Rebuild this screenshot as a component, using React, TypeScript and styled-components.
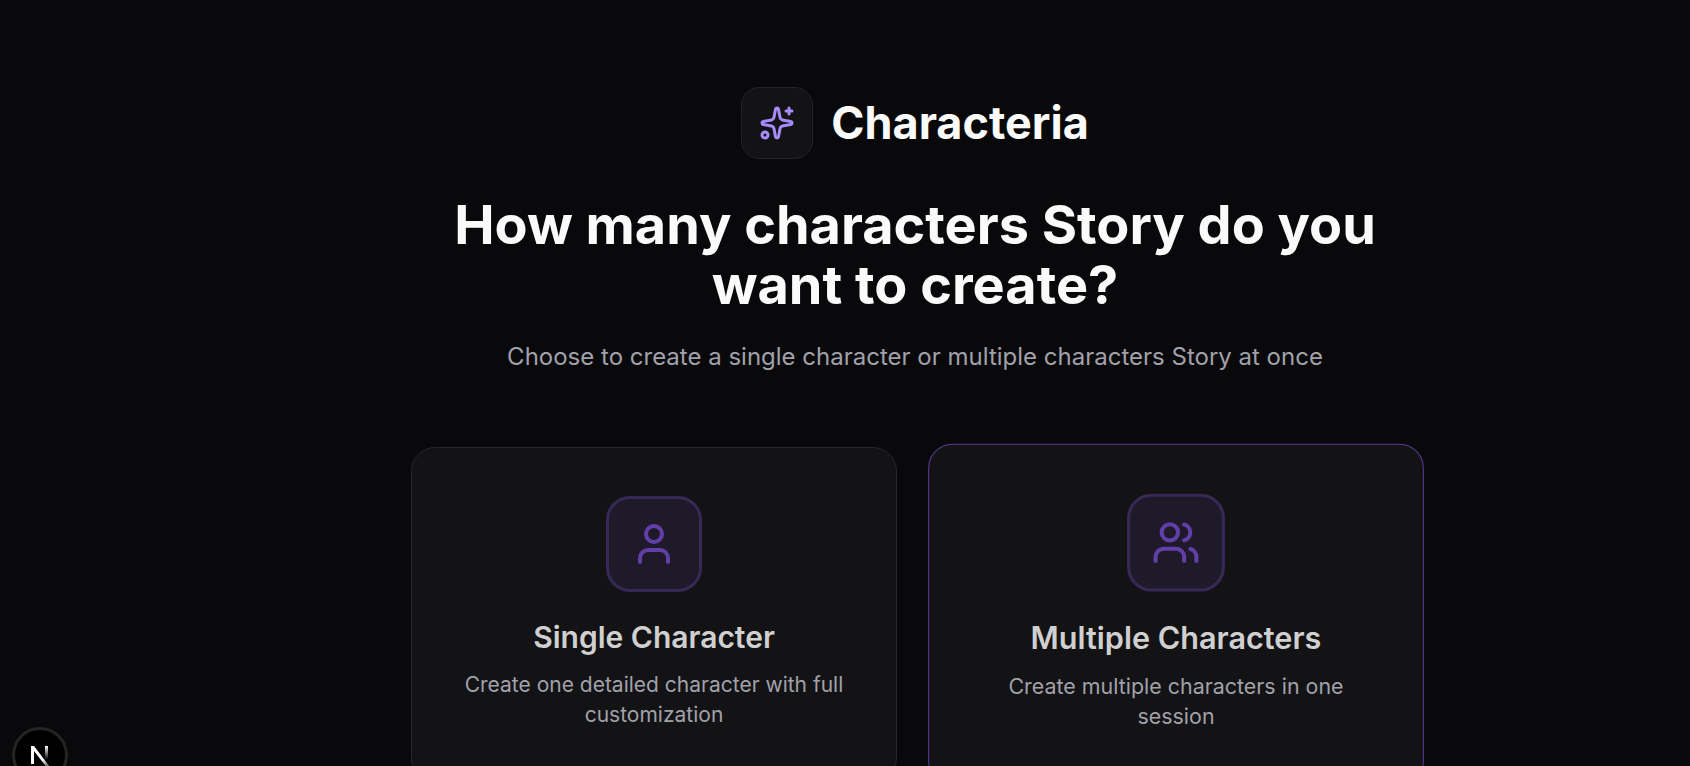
import React from 'react';
import styled, { createGlobalStyle } from 'styled-components';
import { Sparkles, User, Users, type LucideIcon } from 'lucide-react';

const GlobalStyle = createGlobalStyle`
  *, *::before, *::after { box-sizing: border-box; }
  html { background: #09090b; }
  body {
    margin: 0;
    height: 100vh;
    overflow: hidden;
    background: #09090b;
    color: #fafafa;
    font-family: Inter, sans-serif;
  }
  h1, h2, p { margin: 0; }
`;

const Page = styled.main`
  display: flex;
  flex-direction: column;
  align-items: center;
  padding: 87px 0 72px 140px;
`;

const Content = styled.div`
  width: 100%;
  max-width: 1008px;
  display: flex;
  flex-direction: column;
  align-items: center;
  text-align: center;
`;

const Brand = styled.div`
  display: flex;
  align-items: center;
  gap: 18px;
  margin-bottom: 36px;
`;

const BrandMark = styled.span`
  display: flex;
  align-items: center;
  justify-content: center;
  width: 72px;
  height: 72px;
  border: 1px solid #232326;
  border-radius: 18px;
  background: #131315;
  color: #a78bfa;
`;

const BrandName = styled.span`
  font-size: 45px;
  line-height: 50px;
  font-weight: 700;
`;

const Title = styled.h1`
  font-size: 54px;
  line-height: 60px;
  font-weight: 700;
`;

const Subtitle = styled.p`
  margin-top: 24px;
  font-size: 24px;
  line-height: 36px;
  color: #a1a1aa;
`;

const Choices = styled.div`
  width: 100%;
  display: grid;
  grid-template-columns: 1fr 1fr;
  gap: 36px;
  margin-top: 72px;
`;

const Card = styled.button<{ $active?: boolean }>`
  display: flex;
  flex-direction: column;
  align-items: center;
  min-height: 335px;
  padding: 48px;
  border: 1px solid ${({ $active }) => ($active ? '#583b98' : '#27272a')};
  border-radius: 24px;
  background: #131315;
  color: #d0d0d0;
  font-family: inherit;
  text-align: center;
  cursor: pointer;
  transform: ${({ $active }) => ($active ? 'scale(1.02)' : 'none')};
`;

const CardIcon = styled.span`
  display: flex;
  align-items: center;
  justify-content: center;
  width: 96px;
  height: 96px;
  border: 3px solid #372856;
  border-radius: 24px;
  background: #1f1a2a;
  color: #623fa8;
`;

const CardTitle = styled.span`
  margin-top: 24px;
  font-size: 30px;
  line-height: 42px;
  font-weight: 600;
`;

const CardText = styled.span`
  margin-top: 12px;
  font-size: 21px;
  line-height: 30px;
  color: #a1a1aa;
`;

const DevBadge = styled.button`
  position: fixed;
  left: 12px;
  bottom: -17px;
  width: 56px;
  height: 56px;
  padding: 0;
  display: flex;
  align-items: center;
  justify-content: center;
  border: 3px solid #242424;
  border-radius: 50%;
  background: #000;

  svg { flex-shrink: 0; }
`;

const choices: { icon: LucideIcon; title: string; text: string; active?: boolean }[] = [
  { icon: User, title: 'Single Character', text: 'Create one detailed character with full customization' },
  { icon: Users, title: 'Multiple Characters', text: 'Create multiple characters in one session', active: true },
];

const NextLogo = () => (
  <svg width="54" height="54" viewBox="0 0 54 54" fill="none" aria-hidden="true">
    <defs>
      <linearGradient id="stem" x1="0" y1="18" x2="0" y2="34" gradientUnits="userSpaceOnUse">
        <stop stopColor="#fff" />
        <stop offset="0.85" stopColor="#fff" stopOpacity="0" />
      </linearGradient>
      <linearGradient id="diagonal" x1="30" y1="31" x2="38" y2="42" gradientUnits="userSpaceOnUse">
        <stop stopColor="#fff" />
        <stop offset="1" stopColor="#fff" stopOpacity="0" />
      </linearGradient>
    </defs>
    <path d="M18 18H21L37 39L35 41L21 23V36H18Z" fill="url(#diagonal)" />
    <path d="M33.500 18V36" stroke="url(#stem)" strokeWidth="3" />
  </svg>
);

export default function App() {
  return (
    <>
      <GlobalStyle />
      <Page>
        <Content>
          <Brand>
            <BrandMark>
              <Sparkles size={36} />
            </BrandMark>
            <BrandName>Characteria</BrandName>
          </Brand>
          <Title>How many characters Story do you want to create?</Title>
          <Subtitle>Choose to create a single character or multiple characters Story at once</Subtitle>
          <Choices>
            {choices.map(({ icon: Icon, title, text, active }) => (
              <Card key={title} type="button" $active={active}>
                <CardIcon>
                  <Icon size={48} />
                </CardIcon>
                <CardTitle>{title}</CardTitle>
                <CardText>{text}</CardText>
              </Card>
            ))}
          </Choices>
        </Content>
      </Page>
      <DevBadge type="button" aria-label="Open Next.js Dev Tools">
        <NextLogo />
      </DevBadge>
    </>
  );
}
